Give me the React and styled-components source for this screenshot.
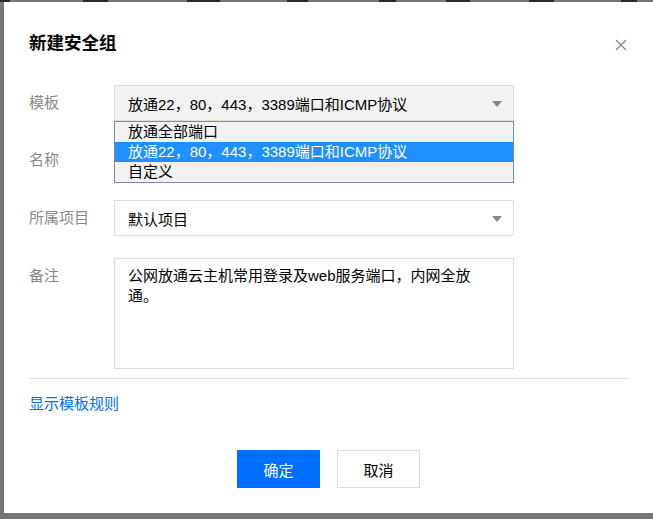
import React from "react";
import styled, { createGlobalStyle } from "styled-components";

const FONT = `"Liberation Sans", "Noto Sans CJK SC", sans-serif`;

const Global = createGlobalStyle`
  html, body { margin: 0; padding: 0; }
  body { background: #767676; font-family: ${FONT}; }
  * { box-sizing: border-box; }
`;

const Page = styled.div`
  width: 653px;
  height: 519px;
  overflow: hidden;
  background: #767676;
  position: relative;
  padding: 2px 0 0 4px;
`;

const BackdropStrip = styled.div`
  position: absolute;
  left: 0;
  top: 0;
  width: 653px;
  height: 2px;
  display: flex;
`;

const Frag = styled.span`
  position: absolute;
  top: 0;
  height: 2px;
  left: ${(p) => p.$x}px;
  width: ${(p) => p.$w}px;
  background: #2a2a2a;
`;

const Dialog = styled.div`
  position: relative;
  width: 650px;
  height: 511px;
  background: #fff;
  padding: 0 25px;
`;

const Header = styled.div`
  display: flex;
  justify-content: space-between;
  align-items: center;
  height: 83px;
  padding-bottom: 2px;
`;

const Title = styled.h2`
  margin: 0;
  font-size: 17.5px;
  font-weight: 700;
  color: #000;
  line-height: 20px;
`;

const Close = styled.button`
  width: 16px;
  height: 16px;
  padding: 0;
  margin-top: 4px;
  border: none;
  background: transparent;
  display: flex;
  align-items: center;
  justify-content: center;
`;

const Form = styled.div`
  display: grid;
  grid-template-columns: 85px 400px;
  row-gap: 22px;
`;

const Label = styled.div`
  font-size: 15px;
  line-height: 36px;
  color: #888;
  margin-top: ${(p) => p.$mt || 0}px;
`;

const Field = styled.div`
  position: relative;
  width: 400px;
  margin-top: ${(p) => p.$mt || 0}px;
`;

const SelectBox = styled.div`
  height: 36px;
  border: 1px solid #ddd;
  background: ${(p) => (p.$open ? "#f2f2f2" : "#fff")};
  display: flex;
  align-items: center;
  justify-content: space-between;
  padding: 0 11px 0 13px;
  font-size: 15px;
  color: #000;
`;

const Arrow = styled.span`
  width: 0;
  height: 0;
  border-left: 5px solid transparent;
  border-right: 5px solid transparent;
  border-top: 6px solid #888;
  margin-top: 2px;
`;

const Dropdown = styled.ul`
  position: absolute;
  left: 0;
  top: 36px;
  width: 400px;
  margin: 0;
  padding: 0;
  list-style: none;
  border: 1px solid #7a8aad;
  background: #f2f2f2;
  z-index: 2;
`;

const Option = styled.li`
  height: 20px;
  line-height: 20px;
  padding-left: 13px;
  font-size: 15px;
  color: ${(p) => (p.$active ? "#fff" : "#000")};
  background: ${(p) => (p.$active ? "#1e90ff" : "transparent")};
  white-space: nowrap;
`;

const Input = styled.div`
  height: 36px;
  border: 1px solid #ddd;
  background: #fff;
`;

const TextArea = styled.div`
  height: 111px;
  border: 1px solid #ddd;
  padding: 7px 32px 7px 13px;
  font-size: 15px;
  line-height: 20px;
  color: #000;
  word-break: break-all;
`;

const Divider = styled.hr`
  margin: 9px 0 0;
  border: none;
  border-top: 1px solid #ddd;
  width: 600px;
`;

const Link = styled.a`
  display: block;
  margin-top: 15px;
  font-size: 15px;
  line-height: 20px;
  color: #006eff;
  text-decoration: none;
`;

const Footer = styled.div`
  display: flex;
  justify-content: center;
  gap: 17px;
  margin-top: 36px;
  padding-right: 1px;
`;

const Button = styled.button`
  width: 83px;
  height: 38px;
  font-family: ${FONT};
  font-size: 15px;
  border: 1px solid ${(p) => (p.$primary ? "#006eff" : "#ddd")};
  background: ${(p) => (p.$primary ? "#006eff" : "#fff")};
  color: ${(p) => (p.$primary ? "#fff" : "#000")};
  padding: 0;
`;

const frags = [
  [0, 10], [83, 25], [187, 33], [287, 21], [379, 17], [446, 24], [529, 25], [621, 16],
];

export default function App() {
  return (
    <>
      <Global />
      <Page>
        <BackdropStrip>
          {frags.map(([x, w]) => (
            <Frag key={x} $x={x} $w={w} />
          ))}
        </BackdropStrip>
        <Dialog>
          <Header>
            <Title>新建安全组</Title>
            <Close aria-label="关闭">
              <svg width="12" height="12" viewBox="0 0 12 12">
                <path d="M1 1 L11 11 M11 1 L1 11" stroke="#888" strokeWidth="1.4" fill="none" />
              </svg>
            </Close>
          </Header>
          <Form>
            <Label>模板</Label>
            <Field>
              <SelectBox $open>
                <span>放通22，80，443，3389端口和ICMP协议</span>
                <Arrow />
              </SelectBox>
              <Dropdown>
                <Option>放通全部端口</Option>
                <Option $active>放通22，80，443，3389端口和ICMP协议</Option>
                <Option>自定义</Option>
              </Dropdown>
            </Field>
            <Label $mt={-1}>名称</Label>
            <Field $mt={-1}>
              <Input />
            </Field>
            <Label>所属项目</Label>
            <Field>
              <SelectBox>
                <span>默认项目</span>
                <Arrow />
              </SelectBox>
            </Field>
            <Label>备注</Label>
            <Field>
              <TextArea>公网放通云主机常用登录及web服务端口，内网全放通。</TextArea>
            </Field>
          </Form>
          <Divider />
          <Link href="#">显示模板规则</Link>
          <Footer>
            <Button $primary>确定</Button>
            <Button>取消</Button>
          </Footer>
        </Dialog>
      </Page>
    </>
  );
}
